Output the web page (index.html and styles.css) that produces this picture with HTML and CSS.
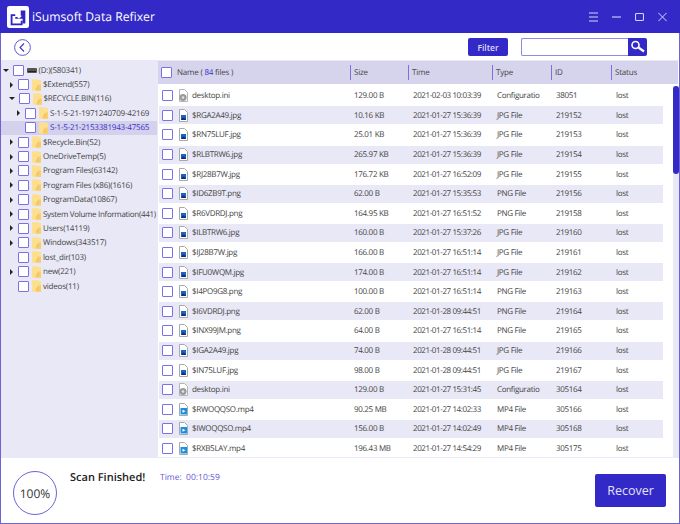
FILE: index.html
```html
<!DOCTYPE html>
<html lang="en">
<head>
<meta charset="utf-8">
<title>iSumsoft Data Refixer</title>
<link rel="stylesheet" href="styles.css">
</head>
<body>
<svg class="defs" width="0" height="0" aria-hidden="true">
  <defs>
    <symbol id="folder" viewBox="0 0 10 13">
      <path d="M0 0h7v1h3v12H0z" fill="#fde08f"/>
      <path d="M7 6h3v7H4v-3z" fill="#f8cd6a"/>
      <path d="M6 8h1v1H6zM6 10h1v1H6z" fill="#e3b44c"/>
    </symbol>
    <symbol id="ini" viewBox="0 0 11 13">
      <path d="M1.5.5h5l3 3v9h-8z" fill="#fff" stroke="#b5b5b5"/>
      <circle cx="5" cy="8.500" r="3.600" fill="#9b9b9b"/>
      <circle cx="5" cy="8.500" r="1.200" fill="#e5e5e5"/>
    </symbol>
    <symbol id="img" viewBox="0 0 11 13">
      <path d="M1.5.5h5l3 3v9h-8z" fill="#fff" stroke="#a9a9a9"/>
      <rect x="3" y="6" width="5" height="5" fill="#1f63c2"/>
      <path d="M3 11l2-3 1 1.500 1-1 1 2.500z" fill="#0d2f7e"/>
    </symbol>
    <symbol id="vid" viewBox="0 0 11 13">
      <path d="M1.500.5h5l3 3v9h-8z" fill="#fff" stroke="#a9a9a9"/>
      <rect x="2.500" y="5" width="6.500" height="6.500" fill="#1c8fe0"/>
      <path d="M4.500 6.800l3 1.500-3 1.500z" fill="#fff"/>
    </symbol>
  </defs>
</svg>
<main class="window">
  <header class="titlebar">
    <div class="brand">
      <svg class="logo" viewBox="0 0 24 24" width="22" height="22" aria-hidden="true">
        <rect width="24" height="24" rx="2.500" fill="#fff"/>
        <path d="M4 9h5v2H6v8h9v-3h2v5H4z" fill="#2f25c4"/>
        <path d="M9 12h6V5h5v14h-3v-5H9z" fill="#2f25c4"/>
        <path d="M12 4.500h2v6h2.500L13 14l-3.500-3.500H12z" fill="#fff"/>
      </svg>
      <span class="app-name">iSumsoft Data Refixer</span>
    </div>
    <div class="win-controls">
      <svg viewBox="0 0 9 10" width="9" height="10" aria-hidden="true"><path d="M0 1h9M0 5h9M0 9h9" stroke="#d6d4f5" stroke-width="1.100" fill="none"/></svg>
      <svg viewBox="0 0 9 10" width="9" height="10" aria-hidden="true"><path d="M0 5h9" stroke="#d6d4f5" stroke-width="1.100" fill="none"/></svg>
      <svg viewBox="0 0 9 10" width="9" height="10" aria-hidden="true"><rect x=".5" y="1.500" width="8" height="7" rx="1" stroke="#d6d4f5" stroke-width="1.100" fill="none"/></svg>
      <svg viewBox="0 0 9 10" width="9" height="10" aria-hidden="true"><path d="M.3.8l8.400 8.400M8.700.8L.3 9.200" stroke="#d6d4f5" stroke-width="1" fill="none"/></svg>
    </div>
  </header>

  <div class="toolbar">
    <svg class="back" viewBox="0 0 17 17" width="17" height="17" aria-hidden="true">
      <circle cx="8.500" cy="8.500" r="7.900" fill="none" stroke="#5f57d8" stroke-width="1"/>
      <path d="M10 4.500L6 8.500l4 4" fill="none" stroke="#3a30c8" stroke-width="1.100"/>
    </svg>
    <div class="tools">
      <button class="filter" type="button">Filter</button>
      <div class="search">
        <span class="search-input"></span>
        <span class="search-btn">
          <svg viewBox="0 0 16 14" width="16" height="14" aria-hidden="true">
            <circle cx="5.500" cy="5" r="3.500" fill="none" stroke="#fff" stroke-width="1.600"/>
            <path d="M8.500 7.500l5.500 4" stroke="#fff" stroke-width="2.200"/>
          </svg>
        </span>
      </div>
    </div>
  </div>

  <div class="content">
    <aside class="tree">
      <ul>
        <li class="node"><i class="caret down"></i><i class="check"></i><svg class="drive" viewBox="0 0 10 5" width="10" height="5" aria-hidden="true"><rect y="0" width="10" height="5" rx="1" fill="#555"/><rect x="1" y="3" width="8" height="1" fill="#222"/></svg><span>(D:)(580341)</span></li>
        <li class="node l1"><i class="caret"></i><i class="check"></i><svg class="ico"><use href="#folder"/></svg><span>$Extend(557)</span></li>
        <li class="node l1"><i class="caret down"></i><i class="check"></i><svg class="ico"><use href="#folder"/></svg><span>$RECYCLE.BIN(116)</span></li>
        <li class="node l2"><i class="caret"></i><i class="check"></i><svg class="ico"><use href="#folder"/></svg><span>S-1-5-21-1971240709-42169</span></li>
        <li class="node l2 selected"><i class="caret none"></i><i class="check"></i><svg class="ico"><use href="#folder"/></svg><span>S-1-5-21-2153381943-47565</span></li>
        <li class="node l1"><i class="caret"></i><i class="check"></i><svg class="ico"><use href="#folder"/></svg><span>$Recycle.Bin(52)</span></li>
        <li class="node l1"><i class="caret"></i><i class="check"></i><svg class="ico"><use href="#folder"/></svg><span>OneDriveTemp(5)</span></li>
        <li class="node l1"><i class="caret"></i><i class="check"></i><svg class="ico"><use href="#folder"/></svg><span>Program Files(63142)</span></li>
        <li class="node l1"><i class="caret"></i><i class="check"></i><svg class="ico"><use href="#folder"/></svg><span>Program Files (x86)(1616)</span></li>
        <li class="node l1"><i class="caret"></i><i class="check"></i><svg class="ico"><use href="#folder"/></svg><span>ProgramData(10867)</span></li>
        <li class="node l1"><i class="caret"></i><i class="check"></i><svg class="ico"><use href="#folder"/></svg><span class="tight">System Volume Information(441)</span></li>
        <li class="node l1"><i class="caret"></i><i class="check"></i><svg class="ico"><use href="#folder"/></svg><span>Users(14119)</span></li>
        <li class="node l1"><i class="caret"></i><i class="check"></i><svg class="ico"><use href="#folder"/></svg><span>Windows(343517)</span></li>
        <li class="node l1"><i class="caret none"></i><i class="check"></i><svg class="ico"><use href="#folder"/></svg><span>lost_dir(103)</span></li>
        <li class="node l1"><i class="caret"></i><i class="check"></i><svg class="ico"><use href="#folder"/></svg><span>new(221)</span></li>
        <li class="node l1"><i class="caret none"></i><i class="check"></i><svg class="ico"><use href="#folder"/></svg><span>videos(11)</span></li>
      </ul>
    </aside>

    <section class="files">
      <div class="head">
        <div class="cell c-name"><i class="check"></i><span>Name ( <b>84</b> files )</span></div>
        <div class="cell c-size">Size</div>
        <div class="cell c-time">Time</div>
        <div class="cell c-type">Type</div>
        <div class="cell c-id">ID</div>
        <div class="cell c-status">Status</div>
      </div>
      <div class="body">
        <div class="rows">
          <div class="row"><div class="c-name"><i class="check"></i><svg class="fi"><use href="#ini"/></svg><span>desktop.ini</span></div><div class="c-size">129.00 B</div><div class="c-time">2021-02-03 10:03:39</div><div class="c-type">Configuratio</div><div class="c-id">38051</div><div class="c-status">lost</div></div>
          <div class="row"><div class="c-name"><i class="check"></i><svg class="fi"><use href="#img"/></svg><span>$RGA2A49.jpg</span></div><div class="c-size">10.16 KB</div><div class="c-time">2021-01-27 15:36:39</div><div class="c-type">JPG File</div><div class="c-id">219152</div><div class="c-status">lost</div></div>
          <div class="row"><div class="c-name"><i class="check"></i><svg class="fi"><use href="#img"/></svg><span>$RN75LUF.jpg</span></div><div class="c-size">25.01 KB</div><div class="c-time">2021-01-27 15:36:39</div><div class="c-type">JPG File</div><div class="c-id">219153</div><div class="c-status">lost</div></div>
          <div class="row"><div class="c-name"><i class="check"></i><svg class="fi"><use href="#img"/></svg><span>$RLBTRW6.jpg</span></div><div class="c-size">265.97 KB</div><div class="c-time">2021-01-27 15:36:39</div><div class="c-type">JPG File</div><div class="c-id">219154</div><div class="c-status">lost</div></div>
          <div class="row"><div class="c-name"><i class="check"></i><svg class="fi"><use href="#img"/></svg><span>$RJ28B7W.jpg</span></div><div class="c-size">176.72 KB</div><div class="c-time">2021-01-27 16:52:09</div><div class="c-type">JPG File</div><div class="c-id">219155</div><div class="c-status">lost</div></div>
          <div class="row"><div class="c-name"><i class="check"></i><svg class="fi"><use href="#img"/></svg><span>$ID6ZB9T.png</span></div><div class="c-size">62.00 B</div><div class="c-time">2021-01-27 15:35:53</div><div class="c-type">PNG File</div><div class="c-id">219156</div><div class="c-status">lost</div></div>
          <div class="row"><div class="c-name"><i class="check"></i><svg class="fi"><use href="#img"/></svg><span>$R6VDRDJ.png</span></div><div class="c-size">164.95 KB</div><div class="c-time">2021-01-27 16:51:52</div><div class="c-type">PNG File</div><div class="c-id">219158</div><div class="c-status">lost</div></div>
          <div class="row"><div class="c-name"><i class="check"></i><svg class="fi"><use href="#img"/></svg><span>$ILBTRW6.jpg</span></div><div class="c-size">160.00 B</div><div class="c-time">2021-01-27 15:37:26</div><div class="c-type">JPG File</div><div class="c-id">219160</div><div class="c-status">lost</div></div>
          <div class="row"><div class="c-name"><i class="check"></i><svg class="fi"><use href="#img"/></svg><span>$IJ28B7W.jpg</span></div><div class="c-size">166.00 B</div><div class="c-time">2021-01-27 16:51:14</div><div class="c-type">JPG File</div><div class="c-id">219161</div><div class="c-status">lost</div></div>
          <div class="row"><div class="c-name"><i class="check"></i><svg class="fi"><use href="#img"/></svg><span>$IFU0WQM.jpg</span></div><div class="c-size">174.00 B</div><div class="c-time">2021-01-27 16:51:14</div><div class="c-type">JPG File</div><div class="c-id">219162</div><div class="c-status">lost</div></div>
          <div class="row"><div class="c-name"><i class="check"></i><svg class="fi"><use href="#img"/></svg><span>$I4PO9G8.png</span></div><div class="c-size">100.00 B</div><div class="c-time">2021-01-27 16:51:14</div><div class="c-type">PNG File</div><div class="c-id">219163</div><div class="c-status">lost</div></div>
          <div class="row"><div class="c-name"><i class="check"></i><svg class="fi"><use href="#img"/></svg><span>$I6VDRDJ.png</span></div><div class="c-size">62.00 B</div><div class="c-time">2021-01-28 09:44:51</div><div class="c-type">PNG File</div><div class="c-id">219164</div><div class="c-status">lost</div></div>
          <div class="row"><div class="c-name"><i class="check"></i><svg class="fi"><use href="#img"/></svg><span>$INX99JM.png</span></div><div class="c-size">64.00 B</div><div class="c-time">2021-01-27 16:51:14</div><div class="c-type">PNG File</div><div class="c-id">219165</div><div class="c-status">lost</div></div>
          <div class="row"><div class="c-name"><i class="check"></i><svg class="fi"><use href="#img"/></svg><span>$IGA2A49.jpg</span></div><div class="c-size">74.00 B</div><div class="c-time">2021-01-28 09:44:51</div><div class="c-type">JPG File</div><div class="c-id">219166</div><div class="c-status">lost</div></div>
          <div class="row"><div class="c-name"><i class="check"></i><svg class="fi"><use href="#img"/></svg><span>$IN75LUF.jpg</span></div><div class="c-size">98.00 B</div><div class="c-time">2021-01-28 09:44:51</div><div class="c-type">JPG File</div><div class="c-id">219167</div><div class="c-status">lost</div></div>
          <div class="row"><div class="c-name"><i class="check"></i><svg class="fi"><use href="#ini"/></svg><span>desktop.ini</span></div><div class="c-size">129.00 B</div><div class="c-time">2021-01-27 15:31:45</div><div class="c-type">Configuratio</div><div class="c-id">305164</div><div class="c-status">lost</div></div>
          <div class="row"><div class="c-name"><i class="check"></i><svg class="fi"><use href="#vid"/></svg><span>$RWOQQSO.mp4</span></div><div class="c-size">90.25 MB</div><div class="c-time">2021-01-27 14:02:33</div><div class="c-type">MP4 File</div><div class="c-id">305166</div><div class="c-status">lost</div></div>
          <div class="row"><div class="c-name"><i class="check"></i><svg class="fi"><use href="#vid"/></svg><span>$IWOQQSO.mp4</span></div><div class="c-size">156.00 B</div><div class="c-time">2021-01-27 14:02:49</div><div class="c-type">MP4 File</div><div class="c-id">305168</div><div class="c-status">lost</div></div>
          <div class="row"><div class="c-name"><i class="check"></i><svg class="fi"><use href="#vid"/></svg><span>$RXB5LAY.mp4</span></div><div class="c-size">196.43 MB</div><div class="c-time">2021-01-27 14:54:29</div><div class="c-type">MP4 File</div><div class="c-id">305175</div><div class="c-status">lost</div></div>
        </div>
        <div class="scrolltrack"><div class="scrollthumb"></div></div>
      </div>
    </section>
  </div>

  <footer class="footer">
    <div class="progress">100%</div>
    <div class="finished">Scan Finished!</div>
    <div class="time">Time:&nbsp; 00:10:59</div>
    <button class="recover" type="button">Recover</button>
  </footer>
</main>
</body>
</html>
```
FILE: styles.css
```css
* { box-sizing: border-box; }
html, body { margin: 0; padding: 0; background: #fff; }
body { width: 680px; height: 524px; overflow: hidden; font-family: "Open Sans", "Noto Sans", sans-serif; text-rendering: geometricPrecision; color: #3c3c3c; }
.defs { display: block; height: 0; }
ul { list-style: none; margin: 0; padding: 0; }
i { font-style: normal; display: block; flex: none; }

.window { width: 680px; height: 524px; display: flex; flex-direction: column; border: 1px solid #6b63d6; border-top: 0; background: #fff; }

.titlebar { height: 33px; flex: none; background: #3229c7; display: flex; align-items: center; justify-content: space-between; padding: 0 13px 0 7px; margin: 0 -1px; }
.brand { display: flex; align-items: center; gap: 3px; }
.logo { display: block; }
.app-name { color: #fff; font-size: 12.200px; }
.win-controls { display: flex; align-items: center; gap: 14px; }
.win-controls svg { display: block; }

.toolbar { height: 27px; flex: none; display: flex; align-items: center; justify-content: space-between; padding: 1px 32px 0 13px; }
.back { display: block; }
.tools { display: flex; align-items: center; gap: 13px; }
.filter { width: 40px; height: 18px; border: 0; border-radius: 2px; background: #3229c7; color: #dcdaf8; font: 600 8.500px "Open Sans", sans-serif; padding: 0; }
.search { display: flex; width: 126px; height: 18px; }
.search-input { flex: 1; border: 1px solid #8f88e4; border-right: 0; border-radius: 2px 0 0 2px; background: #fff; }
.search-btn { width: 19px; background: #3229c7; border-radius: 0 2px 2px 0; display: flex; align-items: center; justify-content: center; }
.search-btn svg { display: block; }

.content { flex: 1; min-height: 0; display: flex; background: #e9e8f6; padding-bottom: 1px; border-top: 1px solid #e9e8f6; }
.tree { width: 156px; flex: none; padding: 2px 0 0 0; }
.node { height: 14.400px; display: flex; align-items: center; font-size: 8px; letter-spacing: -.2px; white-space: nowrap; padding-left: 2px; color: #444; }
.node.l1 { padding-left: 8px; }
.node.l2 { padding-left: 15px; }
.node.selected { background: #d3d1ec; color: #3a30c8; }
.node span { margin-left: 2px; }
.node .tight { letter-spacing: -.32px; }
.caret { width: 0; height: 0; margin-right: 5px; border-style: solid; border-width: 3px 0 3px 3.500px; border-color: transparent transparent transparent #222; margin-left: 1px; }
.caret.down { border-width: 3.500px 3px 0 3px; border-color: #222 transparent transparent transparent; margin-left: 0; margin-right: 3.500px; }
.caret.none { border-color: transparent; }
.check { width: 11px; height: 11px; border: 1px solid #7a72e0; background: #fff; border-radius: 1px; }
.drive { display: block; margin-left: 3px; }
.ico { width: 9px; height: 12px; margin-left: 3px; display: block; flex: none; }

.files { flex: 1; min-width: 0; display: flex; flex-direction: column; background: #fff; margin-left: 1px; }
.head { height: 23px; flex: none; background: #d6d4ec; display: flex; align-items: center; font-size: 8px; letter-spacing: -.2px; color: #444; margin-right: 1px; white-space: nowrap; }
.head b { font-weight: 400; color: #3a30c8; }
.cell { height: 15px; display: flex; align-items: center; }
.cell + .cell { border-left: 1px solid #7a72e0; padding-left: 3px; }
.c-name { width: 192px; flex: none; display: flex; align-items: center; padding-left: 3px; }
.c-name span { margin-left: 5px; }
.c-size { width: 58px; flex: none; }
.c-time { width: 84px; flex: none; }
.c-type { width: 59px; flex: none; }
.c-id { width: 60px; flex: none; }
.c-status { flex: 1; }
.row .c-size { padding-left: 3px; }
.row .c-time { padding-left: 4px; letter-spacing: -.4px; }
.row .c-type { padding-left: 4px; }
.row .c-id { padding-left: 4px; }
.row .c-status { padding-left: 4px; }

.body { flex: 1; min-height: 0; display: flex; padding-top: 2px; overflow: hidden; }
.rows { flex: 1; min-width: 0; }
.row { height: 19.600px; display: flex; align-items: center; font-size: 8px; letter-spacing: -.3px; color: #444; margin-left: 1px; white-space: nowrap; }
.row:nth-child(even) { background: linear-gradient(#e9e8f6, #e9e8f6) 0 50% / 100% 18px no-repeat; }
.fi { width: 11px; height: 13px; margin-left: 5px; display: block; flex: none; }
.row .c-name span { margin-left: 3px; }
.scrolltrack { width: 6px; flex: none; background: #e9e8f6; margin-left: 10px; }
.scrollthumb { width: 6px; height: 88px; background: #3229c7; border-radius: 3px; }

.footer { height: 65px; flex: none; display: flex; align-items: flex-start; padding: 0 0 0 12px; background: #fff; }
.progress { width: 44px; height: 44px; margin-top: 13px; border: 1px solid #6b63d6; border-radius: 50%; display: flex; align-items: center; justify-content: center; font-size: 12px; color: #333; }
.finished { margin: 12px 0 0 13px; font-size: 11px; font-weight: 600; color: #222; width: 90px; white-space: nowrap; }
.time { margin: 14px 0 0 0; font-size: 8.500px; color: #5f57d8; white-space: nowrap; }
.recover { margin: 16px 13px 0 auto; width: 71px; height: 33px; border: 0; border-radius: 2px; background: #3229c7; color: #e3e1fb; font: 400 12.500px "Open Sans", sans-serif; padding: 0; }
```
